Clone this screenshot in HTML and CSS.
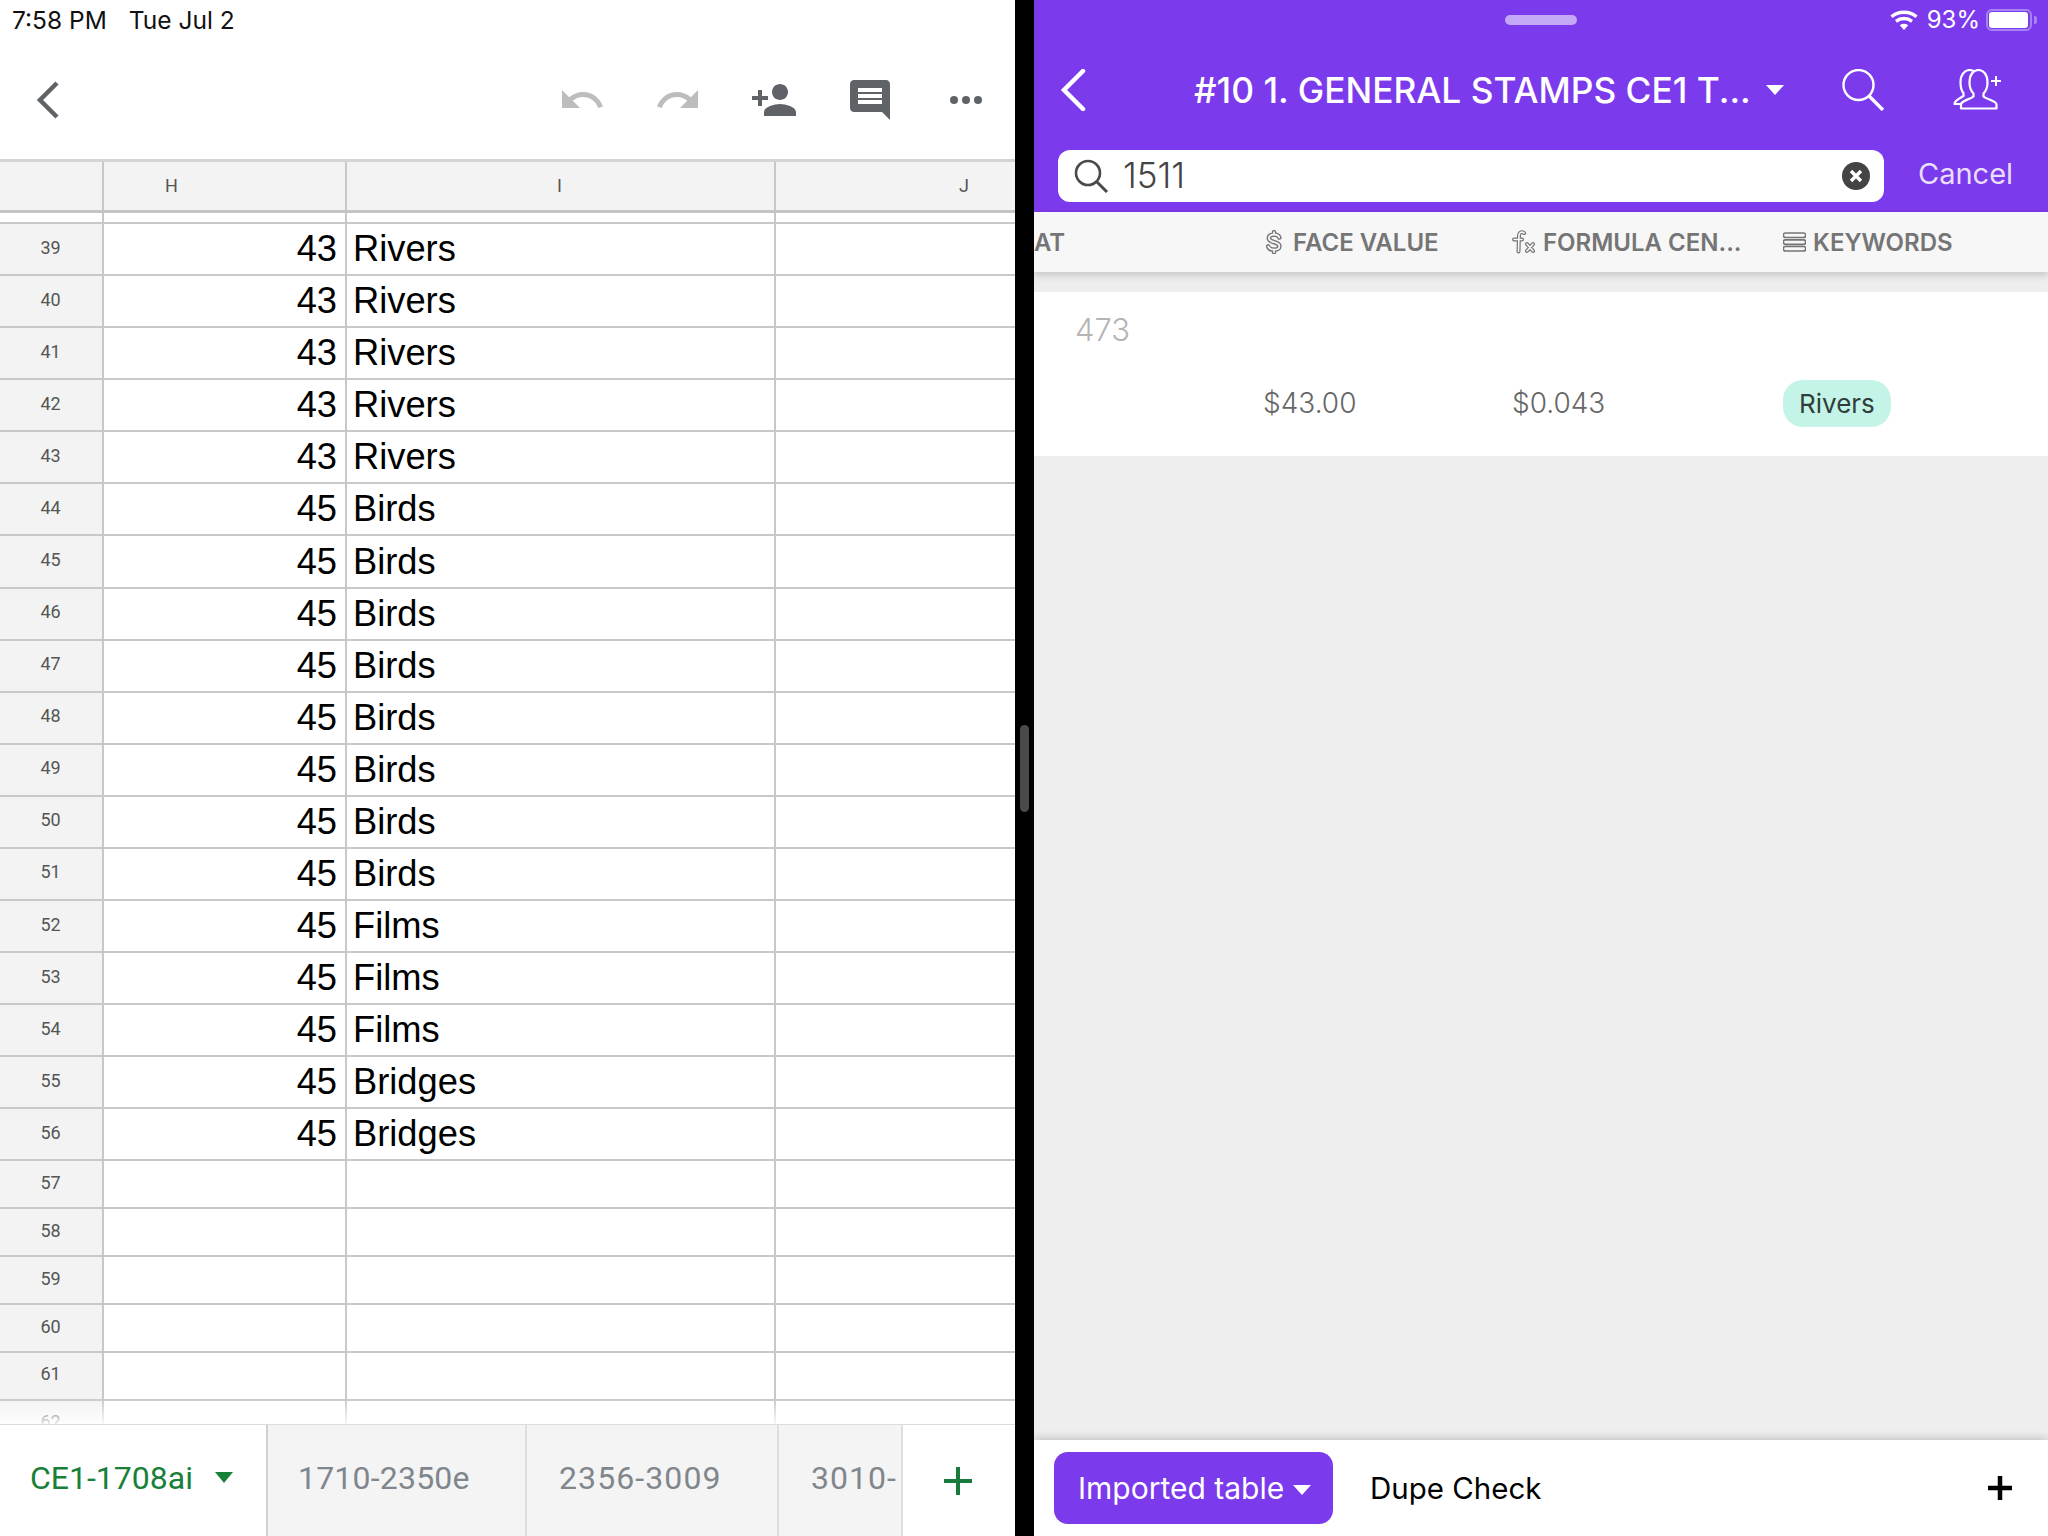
FILE: index.html
```html
<!DOCTYPE html>
<html lang="en">
<head>
    <meta charset="UTF-8">
    <title>Split view</title>
    <link rel="stylesheet" href="styles.css">
</head>
<body>
<div class="screen">

    <!-- left pane: spreadsheet -->
    <div class="sheet-pane">
        <div class="status-left"><span>7:58 PM</span><span>Tue Jul 2</span></div>
        <div class="toolbar">
            <svg class="tool-back" width="23" height="38" viewBox="0 0 23 38"><path d="M21 2 4 19l17 17" fill="none" stroke="#5f6368" stroke-width="4.5"/></svg>
            <div class="tool-icons">
                <svg class="icon-undo" width="48" height="48" viewBox="0 0 24 24"><path fill="#bdbdbd" d="M12.5 8c-2.65 0-5.05.99-6.9 2.6L2 7v9h9l-3.62-3.62c1.39-1.16 3.16-1.88 5.12-1.88 3.54 0 6.55 2.31 7.6 5.5l2.37-.78C21.08 11.03 17.15 8 12.5 8z"/></svg>
                <svg class="icon-redo" width="48" height="48" viewBox="0 0 24 24"><path fill="#bdbdbd" d="M18.4 10.6C16.55 8.99 14.15 8 11.5 8c-4.65 0-8.58 3.03-9.96 7.22L3.9 16c1.05-3.19 4.05-5.5 7.6-5.5 1.95 0 3.73.72 5.12 1.88L13 16h9V7l-3.6 3.6z"/></svg>
                <svg class="icon-person" width="48" height="48" viewBox="0 0 24 24"><path fill="#5f6368" d="M15 12c2.21 0 4-1.79 4-4s-1.79-4-4-4-4 1.79-4 4 1.79 4 4 4zm-9-2V7H4v3H1v2h3v3h2v-3h3v-2H6zm9 4c-2.67 0-8 1.34-8 4v2h16v-2c0-2.66-5.33-4-8-4z"/></svg>
                <svg class="icon-comment" width="48" height="48" viewBox="0 0 24 24"><path fill="#5f6368" d="M21.99 4c0-1.1-.89-2-1.99-2H4c-1.1 0-2 .9-2 2v12c0 1.1.9 2 2 2h14l4 4-.01-18zM18 14H6v-2h12v2zm0-3H6V9h12v2zm0-3H6V6h12v2z"/></svg>
                <div class="icon-dots"><i></i><i></i><i></i></div>
            </div>
        </div>

        <div class="sheet">
            <div class="sheet-row col-head"><div class="num"></div><div class="col-h">H</div><div class="col-i">I</div><div class="col-j">J</div></div>
            <div class="sheet-row gap-row"><div class="num"></div><div></div><div></div><div></div></div>
            <div class="sheet-row"><div class="num">39</div><div class="val">43</div><div class="name">Rivers</div><div></div></div>
            <div class="sheet-row"><div class="num">40</div><div class="val">43</div><div class="name">Rivers</div><div></div></div>
            <div class="sheet-row"><div class="num">41</div><div class="val">43</div><div class="name">Rivers</div><div></div></div>
            <div class="sheet-row"><div class="num">42</div><div class="val">43</div><div class="name">Rivers</div><div></div></div>
            <div class="sheet-row"><div class="num">43</div><div class="val">43</div><div class="name">Rivers</div><div></div></div>
            <div class="sheet-row"><div class="num">44</div><div class="val">45</div><div class="name">Birds</div><div></div></div>
            <div class="sheet-row"><div class="num">45</div><div class="val">45</div><div class="name">Birds</div><div></div></div>
            <div class="sheet-row"><div class="num">46</div><div class="val">45</div><div class="name">Birds</div><div></div></div>
            <div class="sheet-row"><div class="num">47</div><div class="val">45</div><div class="name">Birds</div><div></div></div>
            <div class="sheet-row"><div class="num">48</div><div class="val">45</div><div class="name">Birds</div><div></div></div>
            <div class="sheet-row"><div class="num">49</div><div class="val">45</div><div class="name">Birds</div><div></div></div>
            <div class="sheet-row"><div class="num">50</div><div class="val">45</div><div class="name">Birds</div><div></div></div>
            <div class="sheet-row"><div class="num">51</div><div class="val">45</div><div class="name">Birds</div><div></div></div>
            <div class="sheet-row"><div class="num">52</div><div class="val">45</div><div class="name">Films</div><div></div></div>
            <div class="sheet-row"><div class="num">53</div><div class="val">45</div><div class="name">Films</div><div></div></div>
            <div class="sheet-row"><div class="num">54</div><div class="val">45</div><div class="name">Films</div><div></div></div>
            <div class="sheet-row"><div class="num">55</div><div class="val">45</div><div class="name">Bridges</div><div></div></div>
            <div class="sheet-row"><div class="num">56</div><div class="val">45</div><div class="name">Bridges</div><div></div></div>
            <div class="sheet-row empty"><div class="num">57</div><div></div><div></div><div></div></div>
            <div class="sheet-row empty"><div class="num">58</div><div></div><div></div><div></div></div>
            <div class="sheet-row empty"><div class="num">59</div><div></div><div></div><div></div></div>
            <div class="sheet-row empty"><div class="num">60</div><div></div><div></div><div></div></div>
            <div class="sheet-row empty"><div class="num">61</div><div></div><div></div><div></div></div>
            <div class="sheet-row empty"><div class="num">62</div><div></div><div></div><div></div></div>
            <div class="sheet-fade"></div>
        </div>

        <div class="tabs">
            <div class="tab tab-active">CE1-1708ai<span class="tab-caret"></span></div>
            <div class="tab tab-2">1710-2350e</div>
            <div class="tab tab-3">2356-3009</div>
            <div class="tab tab-4">3010-</div>
            <div class="tab-add">
                <svg width="28" height="28" viewBox="0 0 28 28"><path d="M14 0v28M0 14h28" stroke="#1a7a3c" stroke-width="4"/></svg>
            </div>
        </div>
    </div>

    <div class="divider"><div class="handle"></div></div>

    <!-- right pane: table app -->
    <div class="app-pane">
        <div class="app-head">
            <div class="status-right">
                <div class="pill"></div>
                <div class="status-icons">
                    <svg width="28" height="20" viewBox="0 0 28 20"><path fill="none" stroke="#fff" stroke-width="3.4" d="M1.500 6.800c7-6 18-6 25 0M6 11.400c4.800-3.800 11.200-3.800 16 0"/><path fill="#fff" d="M9.800 15.200c2.600-1.800 5.800-1.800 8.400 0L14 20z"/></svg>
                    <span>93%</span>
                    <div class="battery"><div class="battery-fill"></div></div>
                    <div class="battery-nub"></div>
                </div>
            </div>
            <div class="title-row">
                <svg class="app-back" width="26" height="42" viewBox="0 0 26 42"><path d="M23 2 4 21l19 19" fill="none" stroke="#fff" stroke-width="4.5" stroke-linecap="round"/></svg>
                <div class="title">#10 1. GENERAL STAMPS CE1 T...</div>
                <span class="title-caret"></span>
                <svg class="app-search" width="44" height="42" viewBox="0 0 44 42"><circle cx="16.500" cy="16" r="15" fill="none" stroke="#fff" stroke-width="2.400"/><path d="M27 27l14 14" stroke="#fff" stroke-width="3.300"/></svg>
                <svg class="app-users" width="50" height="42" viewBox="0 0 50 42"><path fill="none" stroke="#fff" stroke-width="2.200" stroke-linejoin="round" d="M9 35H1.500c0-4 6-6 9-8v-3c-2-2-3-6-3-11 0-7 4-12 9-12 3 0 5 1 7 3"/><path fill="#7c3aed" stroke="#fff" stroke-width="2.200" stroke-linejoin="round" d="M8 39.500v-4c0-4 9-5 12.500-8v-3c-2-2-4-6-4-11 0-8 4-12.500 9-12.500s9 4.500 9 12.500c0 5-2 9-4 11v3c3 3 13 4 13 8v4z"/><path stroke="#fff" stroke-width="2" d="M43 7v10M38 12h10"/></svg>
            </div>
            <div class="search-row">
                <div class="search-box">
                    <svg width="36" height="34" viewBox="0 0 36 34"><circle cx="15" cy="14" r="12" fill="none" stroke="#4a4a4a" stroke-width="2.600"/><path d="M24 23l10 10" stroke="#4a4a4a" stroke-width="3"/></svg>
                    <span class="search-text">1511</span>
                    <svg class="search-clear" width="28" height="28" viewBox="0 0 28 28"><circle cx="14" cy="14" r="14" fill="#444"/><path d="M9 9l10 10M19 9 9 19" stroke="#fff" stroke-width="3.400"/></svg>
                </div>
                <div class="cancel">Cancel</div>
            </div>
        </div>

        <div class="columns cols">
            <div class="col-at">AT</div>
            <div class="col-cell">
                <svg class="icon-dollar" width="16" height="24" viewBox="0 0 16 24"><g fill="none" stroke-linecap="round"><path stroke="#757575" stroke-width="4.600" d="M8 2.200v2.500M8 19.500v2.500M13.300 7.500C12.500 5.200 10.500 4.500 8 4.500 5 4.500 2.800 6 2.800 8c0 5.500 10.600 3 10.600 8.200 0 2.200-2.400 3.500-5.400 3.500-2.800 0-5-1-5.800-3.300"/><path stroke="#f7f7f7" stroke-width="1.800" d="M8 2.200v2.500M8 19.500v2.500M13.300 7.500C12.500 5.200 10.500 4.500 8 4.500 5 4.500 2.800 6 2.800 8c0 5.500 10.600 3 10.600 8.200 0 2.200-2.400 3.500-5.400 3.500-2.800 0-5-1-5.800-3.300"/></g></svg>
                FACE VALUE
            </div>
            <div class="col-cell">
                <svg width="23" height="24" viewBox="0 0 23 24"><g fill="none" stroke-linecap="round"><path stroke="#757575" stroke-width="4" d="M12 3C10 1.500 7.500 2 7 5L6.500 21.500M2 9.500h8M15 14l6 7M21 14l-6 7"/><path stroke="#f7f7f7" stroke-width="1.600" d="M12 3C10 1.500 7.500 2 7 5L6.500 21.500M2 9.500h8M15 14l6 7M21 14l-6 7"/></g></svg>
                FORMULA CEN...
            </div>
            <div class="col-cell">
                <svg class="icon-lines" width="23" height="20" viewBox="0 0 23 20"><path fill="none" stroke="#757575" stroke-width="1.700" d="M2.500 1h18a1.500 1.500 0 0 1 0 4.500h-18a1.500 1.500 0 0 1 0-4.500zM2.500 7.800h18a1.500 1.500 0 0 1 0 4.500h-18a1.500 1.500 0 0 1 0-4.500zM2.500 14.500h18a1.500 1.500 0 0 1 0 4.500h-18a1.500 1.500 0 0 1 0-4.500z"/></svg>
                KEYWORDS
            </div>
        </div>

        <div class="records">
            <div class="record">
                <div class="record-id">473</div>
                <div class="cols record-vals">
                    <div></div>
                    <div class="money money-first">$43.00</div>
                    <div class="money">$0.043</div>
                    <div><span class="tag">Rivers</span></div>
                </div>
            </div>
        </div>

        <div class="app-foot">
            <div class="view-btn">Imported table<span class="view-caret"></span></div>
            <div class="view-link">Dupe Check</div>
            <svg class="foot-add" width="26" height="26" viewBox="0 0 26 26"><path d="M13 1v24M1 13h24" stroke="#000" stroke-width="4.500"/></svg>
        </div>
    </div>
</div>
</body>
</html>
```

FILE: styles.css
```css
html, body { margin: 0; padding: 0; width: 2048px; height: 1536px; overflow: hidden; }
*, *::before, *::after { box-sizing: border-box; }
.screen { display: flex; width: 2048px; height: 1536px; font-family: "Liberation Sans", sans-serif; }

/* left pane */
.sheet-pane { width: 1015px; display: flex; flex-direction: column; background: #fff; }
.status-left { height: 40px; display: flex; align-items: center; gap: 22px; padding-left: 12px; font-family: Inter, sans-serif; font-size: 24.5px; color: #111; }
.toolbar { height: 119px; display: flex; align-items: center; justify-content: space-between; padding: 0 33px 0 36px; }
.tool-icons { display: flex; align-items: center; }
.tool-icons svg { display: block; }
.icon-undo { margin-right: 48px; }
.icon-redo { margin-right: 48px; }
.icon-person { margin-right: 48px; }
.icon-comment { margin-right: 56px; }
.icon-dots { display: flex; gap: 4px; }
.icon-dots i { width: 8px; height: 8px; border-radius: 50%; background: #5f6368; }

.sheet { flex: 1; position: relative; overflow: hidden; border-top: 3px solid #d4d4d4; }
.sheet-row { display: grid; grid-template-columns: 104px 243px 429px 1fr; height: 52.09px; border-bottom: 2px solid #c8c8c8; }
.sheet-row > div { border-right: 2px solid #c8c8c8; display: flex; align-items: center; }
.sheet-row > div:last-child { border-right: 0; }
.sheet-row.empty { height: 47.9px; }
.num { justify-content: center; background: #f3f3f3; font-family: Roboto, sans-serif; font-size: 18px; color: #555; padding-bottom: 4px; padding-right: 1px; }
.col-head { height: 51px; border-bottom-width: 3px; border-bottom-color: #c4c4c4; background: #f3f3f3; font-family: Roboto, sans-serif; font-size: 18px; color: #555; }
.col-head > div { padding-bottom: 2px; }
.col-head .col-h { padding-left: 61px; }
.col-head .col-i { justify-content: center; padding-right: 2px; }
.col-head .col-j { justify-content: flex-end; padding-right: 46px; }
.gap-row { height: 11px; }
.gap-row .num { background: #fff; }
.val { justify-content: flex-end; padding-right: 8px; font-size: 36.3px; color: #000; }
.name { padding-left: 6px; font-size: 36.3px; color: #000; }
.sheet-fade { position: absolute; left: 0; right: 0; bottom: 0; height: 26px; background: linear-gradient(rgba(255,255,255,0), rgba(255,255,255,0.85)); }

.tabs { height: 112px; display: flex; border-top: 1px solid #dcdcdc; font-family: Roboto, sans-serif; font-size: 32px; color: #80868b; }
.tab { display: flex; align-items: center; padding-bottom: 6px; white-space: nowrap; background: #f4f4f4; border-right: 2px solid #dedede; }
.tab-active { width: 268px; padding-left: 30px; background: #fff; color: #188038; border-right-color: #d0d0d0; }
.tab-caret { margin-left: 22px; border-left: 9px solid transparent; border-right: 9px solid transparent; border-top: 11px solid #188038; }
.tab-2 { width: 259px; padding-left: 30px; letter-spacing: 0.2px; }
.tab-3 { width: 252px; padding-left: 32px; letter-spacing: 1.1px; }
.tab-4 { width: 124px; padding-left: 32px; letter-spacing: 1px; overflow: hidden; }
.tab-add { flex: 1; display: flex; align-items: center; justify-content: center; padding-right: 2px; background: #fff; }

/* divider */
.divider { width: 19px; background: #000; display: flex; align-items: center; justify-content: center; }
.handle { width: 9px; height: 87px; border-radius: 5px; background: #4a4a4a; }

/* right pane */
.app-pane { flex: 1; display: flex; flex-direction: column; background: #eee; font-family: Inter, sans-serif; }
.app-head { height: 212px; background: #7c3aed; color: #fff; display: flex; flex-direction: column; }
.status-right { height: 40px; position: relative; display: flex; align-items: center; justify-content: flex-end; padding-right: 11px; }
.pill { position: absolute; left: 471px; top: 15px; width: 72px; height: 10px; border-radius: 5px; background: #c4a8f8; }
.status-icons { display: flex; align-items: center; font-size: 24px; }
.status-icons span { margin: 0 6px 0 9px; padding-bottom: 2px; }
.battery { width: 46px; height: 22px; border: 2px solid #a583f3; border-radius: 6px; padding: 1px; }
.battery-fill { width: 39px; height: 100%; background: #fff; border-radius: 3px; }
.battery-nub { width: 3px; height: 8px; margin-left: 2px; background: #a583f3; border-radius: 0 2px 2px 0; }

.title-row { height: 100px; display: flex; align-items: center; padding-left: 26px; }
.title { margin-left: 108px; width: 557px; font-size: 35.3px; font-weight: 500; white-space: nowrap; }
.title-caret { margin-left: 15px; margin-right: 58px; border-left: 9px solid transparent; border-right: 9px solid transparent; border-top: 10px solid #fff; }
.app-search { margin-right: 67px; }

.search-row { height: 52px; margin-top: 10px; display: flex; align-items: center; padding-left: 24px; }
.search-box { width: 826px; height: 52px; background: #fff; border-radius: 12px; display: flex; align-items: center; padding: 0 14px 0 15px; color: #444; }
.search-text { flex: 1; margin-left: 14px; margin-bottom: 2px; font-size: 35px; font-weight: 300; }
.cancel { margin-left: 34px; margin-bottom: 5px; font-size: 29px; color: #e9dffc; }

.cols { display: grid; grid-template-columns: 232px 246px 271px 1fr; }
.columns { height: 60px; align-items: center; background: #f7f7f7; box-shadow: 0 3px 8px rgba(0,0,0,0.18); font-size: 24px; font-weight: 600; color: #757575; position: relative; }
.col-cell { display: flex; align-items: center; gap: 8px; white-space: nowrap; }
.col-cell svg { flex: none; }
.icon-dollar { margin-right: 3px; }
.icon-lines { margin-right: -1px; }

.records { flex: 1; padding-top: 20px; }
.record { height: 164px; background: #fff; }
.record-id { padding: 19px 0 0 41px; height: 79px; font-size: 31px; font-weight: 300; color: #b5b5b5; }
.record-vals { align-items: center; height: 64px; }
.money { font-size: 28px; font-weight: 300; color: #666; }
.money-first { margin-left: -3px; }
.tag { display: inline-block; height: 47px; line-height: 47px; padding: 0 16px; border-radius: 20px; background: #c4f4e8; color: #2f3e3a; font-size: 26px; }

.app-foot { height: 96px; background: #fff; display: flex; align-items: center; padding: 0 35px 0 20px; box-shadow: 0 -2px 8px rgba(0,0,0,0.18); position: relative; }
.view-btn { width: 279px; height: 72px; border-radius: 14px; background: #7c3aed; color: #fff; font-size: 30px; display: flex; align-items: center; padding-left: 24px; }
.view-caret { margin-left: 9px; margin-top: 4px; border-left: 9px solid transparent; border-right: 9px solid transparent; border-top: 10px solid #fff; }
.view-link { flex: 1; margin-left: 37px; font-size: 29.5px; color: #000; }
```
